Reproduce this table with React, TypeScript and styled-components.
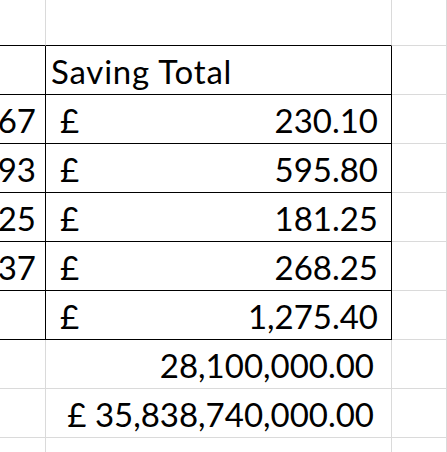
import React from "react";
import styled, { createGlobalStyle } from "styled-components";

const Global = createGlobalStyle`
  html, body { margin: 0; padding: 0; background: #ffffff; overflow: hidden; }
  body { font-family: Lato, "Liberation Sans", sans-serif; }
`;

const GRID = "#dadada";
const INK = "#000000";

const Sheet = styled.div`
  display: grid;
  grid-template-columns: 46px 346px 1fr;
  grid-template-rows: 46px repeat(9, 49px);
  width: 447px;
  height: 452px;
  overflow: hidden;
  background: #ffffff;
  color: #000000;
  font-family: Lato, "Liberation Sans", sans-serif;
  font-size: 33px;
  line-height: 1;
`;

const Cell = styled.div<{ $bb?: boolean; $rb?: boolean; $justify?: string; $pl?: number; $pr?: number }>`
  box-sizing: border-box;
  display: flex;
  align-items: flex-end;
  justify-content: ${(p) => p.$justify ?? "flex-start"};
  padding: 0 ${(p) => p.$pr ?? 0}px 6px ${(p) => p.$pl ?? 0}px;
  border-right: 1px solid ${(p) => (p.$rb ? INK : GRID)};
  border-bottom: 1px solid ${(p) => (p.$bb ? INK : GRID)};
  overflow: hidden;
  white-space: nowrap;
`;

const Header = styled(Cell)`
  letter-spacing: 0.8px;
`;

const Money = styled(Cell)`
  justify-content: space-between;
`;

const Sym = styled.span``;
const Val = styled.span``;

const rowsData = [
  { a: "67", v: "230.10" },
  { a: "93", v: "595.80" },
  { a: "25", v: "181.25" },
  { a: "37", v: "268.25" },
  { a: "", v: "1,275.40" },
];

export default function App() {
  return (
    <>
      <Global />
      <Sheet>
        <Cell $bb />
        <Cell $bb />
        <Cell />

        <Cell $bb $rb />
        <Header $bb $rb $pl={5}>Saving Total</Header>
        <Cell />

        {rowsData.map((r, i) => (
          <React.Fragment key={i}>
            <Cell $bb $rb $justify="flex-end" $pr={9}>{r.a}</Cell>
            <Money $bb $rb $pl={14} $pr={13}>
              <Sym>£</Sym>
              <Val>{r.v}</Val>
            </Money>
            <Cell />
          </React.Fragment>
        ))}

        <Cell />
        <Cell $justify="flex-end" $pr={17}>28,100,000.00</Cell>
        <Cell />

        <Cell />
        <Cell $justify="flex-end" $pr={17}>£ 35,838,740,000.00</Cell>
        <Cell />

        <Cell />
        <Cell />
        <Cell />
      </Sheet>
    </>
  );
}
